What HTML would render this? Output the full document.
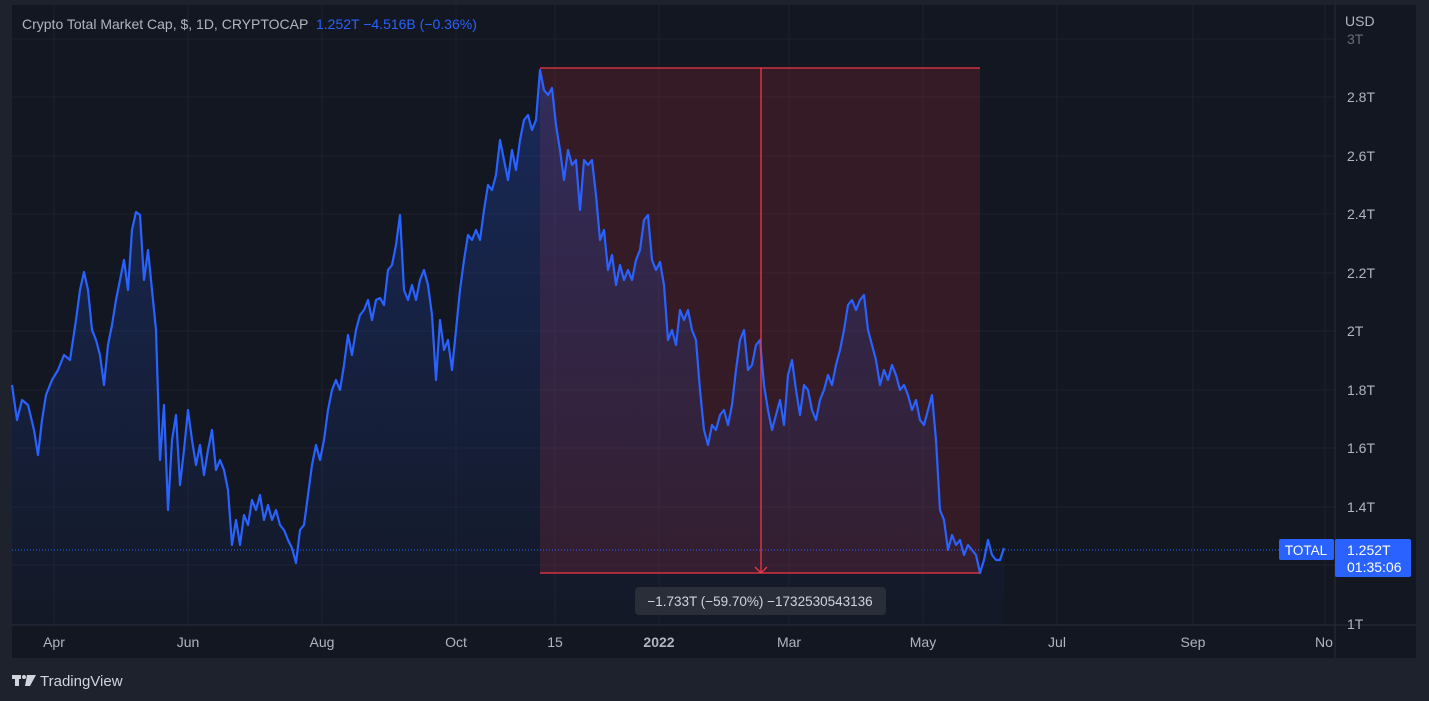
<!DOCTYPE html>
<html><head><meta charset="utf-8"><style>
body{margin:0;width:1429px;height:701px;background:#1e222d;overflow:hidden;font-family:"Liberation Sans",sans-serif;}
svg{position:absolute;left:0;top:0}
</style></head><body>
<svg width="1429" height="701" viewBox="0 0 1429 701" font-family="Liberation Sans, sans-serif">
<defs>
<linearGradient id="g" x1="0" y1="0" x2="0" y2="1">
<stop offset="0" stop-color="#2962ff" stop-opacity="0.25"/>
<stop offset="1" stop-color="#2962ff" stop-opacity="0.02"/>
</linearGradient>
</defs>
<rect x="12" y="5" width="1404" height="653" fill="#131722"/>
<g stroke="#1c202c" stroke-width="1">
<line x1="12" y1="39" x2="1335" y2="39"/><line x1="12" y1="97" x2="1335" y2="97"/><line x1="12" y1="156" x2="1335" y2="156"/><line x1="12" y1="214" x2="1335" y2="214"/><line x1="12" y1="273" x2="1335" y2="273"/><line x1="12" y1="331" x2="1335" y2="331"/><line x1="12" y1="390" x2="1335" y2="390"/><line x1="12" y1="448" x2="1335" y2="448"/><line x1="12" y1="507" x2="1335" y2="507"/><line x1="12" y1="565" x2="1335" y2="565"/>
<line x1="54" y1="5" x2="54" y2="625"/><line x1="188" y1="5" x2="188" y2="625"/><line x1="322" y1="5" x2="322" y2="625"/><line x1="456" y1="5" x2="456" y2="625"/><line x1="555" y1="5" x2="555" y2="625"/><line x1="659" y1="5" x2="659" y2="625"/><line x1="789" y1="5" x2="789" y2="625"/><line x1="923" y1="5" x2="923" y2="625"/><line x1="1057" y1="5" x2="1057" y2="625"/><line x1="1193" y1="5" x2="1193" y2="625"/><line x1="1325" y1="5" x2="1325" y2="625"/>
</g>
<line x1="12" y1="625" x2="1416" y2="625" stroke="#2a2e39"/>
<line x1="1335" y1="5" x2="1335" y2="658" stroke="#2a2e39"/>
<rect x="540" y="68" width="440" height="505" fill="#f23645" fill-opacity="0.15"/>
<polygon fill="url(#g)" points="12,625 12,385 17,420 22,400 28,405 34,430 38,455 42,420 46,395 52,380 58,370 64,355 70,360 76,320 80,290 84,272 88,290 92,330 96,340 100,355 104,385 108,345 112,325 116,300 120,280 124,260 128,290 132,230 136,212 140,215 144,280 148,250 152,290 156,330 160,460 164,405 168,510 172,440 176,415 180,485 184,450 188,410 192,440 196,465 200,445 204,475 208,450 212,430 216,470 220,460 224,470 228,490 232,545 236,520 240,545 244,515 248,525 252,500 256,510 260,495 264,520 268,505 272,520 276,510 280,525 284,530 288,540 292,548 296,563 300,530 304,525 308,495 312,465 316,445 320,460 324,440 328,410 332,390 336,380 340,390 344,365 348,335 352,355 356,330 360,315 364,310 368,300 372,320 376,300 380,298 384,305 388,270 392,265 396,245 400,215 404,290 408,300 412,285 416,300 420,280 424,270 428,285 432,315 436,380 440,320 444,350 448,340 452,370 456,330 460,290 464,260 468,235 472,240 476,230 480,240 484,210 488,185 492,190 496,175 500,140 504,160 508,180 512,150 516,170 520,140 524,120 528,115 532,130 536,120 540,70 544,90 548,95 552,88 556,125 560,150 564,180 568,150 572,165 576,160 580,210 584,160 588,165 592,160 596,195 600,240 604,230 608,270 612,255 616,285 620,265 624,280 628,270 632,280 636,260 640,250 644,220 648,215 652,260 656,270 660,262 664,285 668,340 672,330 676,345 680,310 684,320 688,310 692,330 696,340 700,390 704,430 708,445 712,425 716,430 720,415 724,410 728,425 732,405 736,370 740,340 744,330 748,370 752,365 756,345 760,340 764,385 768,410 772,430 776,415 780,400 784,425 788,375 792,360 796,390 800,415 804,385 808,390 812,410 816,420 820,400 824,390 828,375 832,385 836,365 840,350 844,330 848,305 852,300 856,310 860,300 864,295 868,330 872,345 876,360 880,385 884,370 888,380 892,365 896,375 900,390 904,385 908,395 912,410 916,400 920,420 924,425 928,410 932,395 936,440 940,510 944,520 948,550 952,535 956,545 960,540 964,555 968,545 972,550 976,555 980,573 984,560 988,540 992,555 996,560 1000,560 1004,548 1004,625"/>
<polyline fill="none" stroke="#2962ff" stroke-width="2.2" stroke-linejoin="round" points="12,385 17,420 22,400 28,405 34,430 38,455 42,420 46,395 52,380 58,370 64,355 70,360 76,320 80,290 84,272 88,290 92,330 96,340 100,355 104,385 108,345 112,325 116,300 120,280 124,260 128,290 132,230 136,212 140,215 144,280 148,250 152,290 156,330 160,460 164,405 168,510 172,440 176,415 180,485 184,450 188,410 192,440 196,465 200,445 204,475 208,450 212,430 216,470 220,460 224,470 228,490 232,545 236,520 240,545 244,515 248,525 252,500 256,510 260,495 264,520 268,505 272,520 276,510 280,525 284,530 288,540 292,548 296,563 300,530 304,525 308,495 312,465 316,445 320,460 324,440 328,410 332,390 336,380 340,390 344,365 348,335 352,355 356,330 360,315 364,310 368,300 372,320 376,300 380,298 384,305 388,270 392,265 396,245 400,215 404,290 408,300 412,285 416,300 420,280 424,270 428,285 432,315 436,380 440,320 444,350 448,340 452,370 456,330 460,290 464,260 468,235 472,240 476,230 480,240 484,210 488,185 492,190 496,175 500,140 504,160 508,180 512,150 516,170 520,140 524,120 528,115 532,130 536,120 540,70 544,90 548,95 552,88 556,125 560,150 564,180 568,150 572,165 576,160 580,210 584,160 588,165 592,160 596,195 600,240 604,230 608,270 612,255 616,285 620,265 624,280 628,270 632,280 636,260 640,250 644,220 648,215 652,260 656,270 660,262 664,285 668,340 672,330 676,345 680,310 684,320 688,310 692,330 696,340 700,390 704,430 708,445 712,425 716,430 720,415 724,410 728,425 732,405 736,370 740,340 744,330 748,370 752,365 756,345 760,340 764,385 768,410 772,430 776,415 780,400 784,425 788,375 792,360 796,390 800,415 804,385 808,390 812,410 816,420 820,400 824,390 828,375 832,385 836,365 840,350 844,330 848,305 852,300 856,310 860,300 864,295 868,330 872,345 876,360 880,385 884,370 888,380 892,365 896,375 900,390 904,385 908,395 912,410 916,400 920,420 924,425 928,410 932,395 936,440 940,510 944,520 948,550 952,535 956,545 960,540 964,555 968,545 972,550 976,555 980,573 984,560 988,540 992,555 996,560 1000,560 1004,548"/>
<line x1="540" y1="68" x2="980" y2="68" stroke="#f23645" stroke-width="1.3"/>
<line x1="540" y1="573" x2="980" y2="573" stroke="#f23645" stroke-width="1.3"/>
<line x1="761" y1="68" x2="761" y2="573" stroke="#f23645" stroke-width="1.3"/>
<polyline points="755,567 761,573 767,567" fill="none" stroke="#f23645" stroke-width="1.3"/>
<line x1="12" y1="550" x2="1280" y2="550" stroke="#2962ff" stroke-width="1" stroke-dasharray="1,2"/>
<rect x="635" y="587" width="251" height="28" rx="4" fill="#2a2e39"/>
<text x="760" y="606" fill="#d1d4dc" font-size="13.5" text-anchor="middle">−1.733T (−59.70%) −1732530543136</text>
<text x="22" y="29" fill="#b2b5be" font-size="14">Crypto Total Market Cap, $, 1D, CRYPTOCAP</text>
<text x="316" y="29" fill="#2962ff" font-size="14">1.252T  −4.516B (−0.36%)</text>
<g fill="#b2b5be" font-size="14">
<text x="1345" y="26">USD</text>
<text x="1347" y="44" fill="#6a6d78">3T</text>
<text x="1347" y="102">2.8T</text><text x="1347" y="161">2.6T</text><text x="1347" y="219">2.4T</text><text x="1347" y="278">2.2T</text><text x="1347" y="336">2T</text><text x="1347" y="395">1.8T</text><text x="1347" y="453">1.6T</text><text x="1347" y="512">1.4T</text><text x="1347" y="629">1T</text>
<text x="54" y="647" text-anchor="middle">Apr</text><text x="188" y="647" text-anchor="middle">Jun</text><text x="322" y="647" text-anchor="middle">Aug</text><text x="456" y="647" text-anchor="middle">Oct</text><text x="555" y="647" text-anchor="middle">15</text><text x="659" y="647" text-anchor="middle" font-weight="bold">2022</text><text x="789" y="647" text-anchor="middle">Mar</text><text x="923" y="647" text-anchor="middle">May</text><text x="1057" y="647" text-anchor="middle">Jul</text><text x="1193" y="647" text-anchor="middle">Sep</text><text x="1315" y="647">No</text>
</g>
<rect x="1279" y="539" width="55" height="21" rx="2" fill="#2962ff"/>
<text x="1306" y="555" fill="#fff" font-size="13.5" text-anchor="middle">TOTAL</text>
<rect x="1335" y="539" width="76" height="38" rx="2" fill="#2962ff"/>
<text x="1347" y="555" fill="#fff" font-size="14">1.252T</text>
<text x="1347" y="572" fill="#fff" font-size="14">01:35:06</text>
<g fill="#d1d4dc"><rect x="12" y="675" width="9" height="4"/><rect x="15" y="675" width="4" height="11"/><circle cx="24" cy="677" r="2"/><polygon points="27,675 36,675 30,686 25,686"/></g>
<text x="40" y="686" fill="#d1d4dc" font-size="15">TradingView</text>
</svg>
</body></html>
